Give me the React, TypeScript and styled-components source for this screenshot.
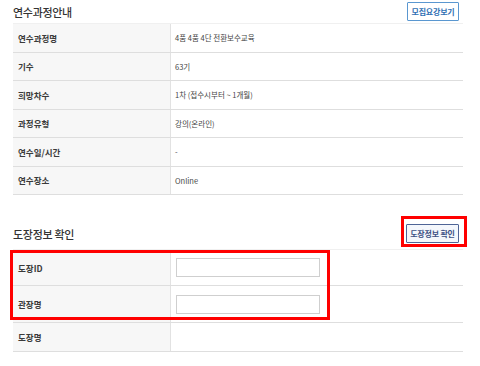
import React from 'react'
import styled, { createGlobalStyle } from 'styled-components'

const GlobalStyle = createGlobalStyle`
  body {
    margin: 0;
    background: #fff;
    font-family: "Noto Sans CJK KR", "Noto Sans", sans-serif;
    color: #333;
  }
`

const Page = styled.div`
  width: 450px;
  padding-left: 13px;
`

const SectionHead = styled.div<{ $height: number }>`
  display: flex;
  align-items: center;
  justify-content: space-between;
  height: ${props => props.$height}px;
`

const Title = styled.h2`
  margin: 0;
  font-size: 11px;
  font-weight: 500;
  color: #333;
  letter-spacing: -0.3px;
`

const Button = styled.button<{ $variant: 'light' | 'navy' }>`
  width: ${props => (props.$variant === 'light' ? 52 : 53)}px;
  height: 19px;
  padding: 0;
  margin-right: 4px;
  font-family: inherit;
  font-size: 8px;
  font-weight: 700;
  letter-spacing: -0.2px;
  cursor: pointer;
  border: 1px solid ${props => (props.$variant === 'light' ? '#5a97d0' : '#4e6496')};
  background: ${props => (props.$variant === 'light' ? '#fff' : '#f4f7fc')};
  color: ${props => (props.$variant === 'light' ? '#2f6fb3' : '#3d5184')};
  border-radius: 1px;
`

const Table = styled.div`
  position: relative;
  border-top: 1px solid #f0f0f0;
`

const Row = styled.div<{ $height: number }>`
  display: grid;
  grid-template-columns: 158px 1fr;
  height: ${props => props.$height}px;
  box-sizing: border-box;
  border-bottom: 1px solid #dedede;
`

const Label = styled.div`
  display: flex;
  align-items: center;
  padding-left: 5px;
  background: #f7f7f7;
  border-right: 1px solid #e2e2e2;
  font-size: 8.5px;
  font-weight: 700;
  color: #3a3a3a;
`

const Value = styled.div`
  display: flex;
  align-items: center;
  padding-left: 4px;
  font-size: 7.5px;
  color: #444;
`

const Input = styled.input`
  width: 144px;
  height: 19px;
  box-sizing: border-box;
  border: 1px solid #cfcfcf;
  margin: 0 0 0 1px;
  padding: 0 4px;
  font-size: 8px;
`

const Spacer = styled.div`
  height: 23px;
`

const ButtonWrap = styled.div`
  position: relative;
  display: flex;
`

const Highlight = styled.div`
  position: absolute;
  border: 3px solid #f00;
  box-sizing: border-box;
  pointer-events: none;
`

const courseRows = [
  ['연수과정명', '4품 4품 4단 전환보수교육'],
  ['기수', '63기'],
  ['희망차수', '1차 (접수시부터 ~ 1개월)'],
  ['과정유형', '강의(온라인)'],
  ['연수일/시간', '-'],
  ['연수장소', 'Online'],
]

export default function App() {
  return (
    <Page>
      <GlobalStyle />
      <SectionHead $height={23}>
        <Title>연수과정안내</Title>
        <Button $variant='light'>모집요강보기</Button>
      </SectionHead>
      <Table>
        {courseRows.map(([label, value]) => (
          <Row key={label} $height={28.5}>
            <Label>{label}</Label>
            <Value>{value}</Value>
          </Row>
        ))}
      </Table>

      <Spacer />
      <SectionHead $height={31}>
        <Title>도장정보 확인</Title>
        <ButtonWrap>
          <Button $variant='navy'>도장정보 확인</Button>
          <Highlight style={{ left: -5, top: -8, width: 66, height: 31 }} />
        </ButtonWrap>
      </SectionHead>
      <Table>
        <Row $height={36}>
          <Label>도장ID</Label>
          <Value>
            <Input />
          </Value>
        </Row>
        <Row $height={37}>
          <Label>관장명</Label>
          <Value>
            <Input />
          </Value>
        </Row>
        <Row $height={29}>
          <Label>도장명</Label>
          <Value />
        </Row>
        <Highlight style={{ left: -3, top: 0, width: 320, height: 70 }} />
      </Table>
    </Page>
  )
}
